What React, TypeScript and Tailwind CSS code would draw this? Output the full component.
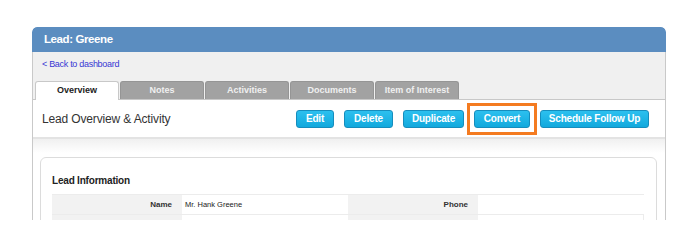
export default function App() {
  const tabs = ["Overview", "Notes", "Activities", "Documents", "Item of Interest"];
  const buttons = [
    { label: "Edit", w: "w-[38px]", hi: false },
    { label: "Delete", w: "w-[49px]", hi: false },
    { label: "Duplicate", w: "w-[61px]", hi: false },
    { label: "Convert", w: "w-[56px]", hi: true },
    { label: "Schedule Follow Up", w: "w-[109px]", hi: false },
  ];
  return (
    <div className="w-[700px] h-[242px] bg-white pt-[27px] pl-[32px] font-['Liberation_Sans',Arial,sans-serif]">
      <div className="w-[634px] h-[193px] overflow-hidden rounded-t-[5px] flex flex-col">
        <div className="h-[25px] shrink-0 bg-[#5b8dc0] rounded-t-[5px] pl-[12px] flex items-center text-white font-bold text-[11.5px] tracking-[-0.4px]">
          Lead: Greene
        </div>
        <div className="flex-1 flex flex-col border-x border-[#c9c9c9]">
          <div className="bg-[#f0f0f0] h-[48px] shrink-0 flex flex-col border-b border-[#c8c8c8]">
            <div className="pl-[9px] pt-[6px] h-[29px] shrink-0 text-[9px] leading-[12px] text-[#3838d4] tracking-[-0.3px]">
              &lt; Back to dashboard
            </div>
            <div className="flex gap-[1px] pl-[2px] h-[18px] items-end">
              {tabs.map((t, i) =>
                i === 0 ? (
                  <div
                    key={t}
                    className="relative w-[84px] h-[19px] -mb-px bg-white border border-b-0 border-[#c8c8c8] rounded-t-[3px] flex items-center justify-center text-[9px] font-bold text-[#222]"
                  >
                    {t}
                  </div>
                ) : (
                  <div
                    key={t}
                    className="w-[84px] h-[18px] bg-[#a2a2a2] border border-b-0 border-[#959595] rounded-t-[3px] flex items-center justify-center text-[9px] font-bold text-[#f0f0f0]"
                  >
                    {t}
                  </div>
                )
              )}
            </div>
          </div>
          <div className="h-[37px] shrink-0 bg-white flex items-center justify-between pl-[9px] pr-[16px]">
            <div className="text-[12px] text-[#333] tracking-[-0.15px]">Lead Overview &amp; Activity</div>
            <div className="flex gap-[10px] items-center">
              {buttons.map((b) => (
                <div key={b.label} className="relative">
                  <div
                    className={`${b.w} h-[18px] rounded-[3px] bg-[linear-gradient(to_bottom,#2cc0ef,#12a9dd)] border border-[#168dbd] flex items-center justify-center text-white font-bold text-[10px] tracking-[-0.2px] whitespace-nowrap`}
                  >
                    {b.label}
                  </div>
                  {b.hi && (
                    <div className="absolute -inset-[7px] border-[3px] border-[#f47b20]" />
                  )}
                </div>
              ))}
            </div>
          </div>
          <div className="flex-1 border-t-2 border-[#e3e3e3] bg-[linear-gradient(to_bottom,#f0f0f0,#ffffff_14px)] pt-[18px] pl-[7px] pr-[8px]">
            <div className="h-[80px] rounded-[6px] border border-[#dcdcdc] bg-white pt-[17px] px-[11px]">
              <div className="text-[10px] leading-[12px] font-bold text-[#222] tracking-[-0.2px] mb-[7px]">
                Lead Information
              </div>
              <div className="w-[592px] border-r border-[#ececec]">
                <div className="grid grid-cols-[130px_166px_130px_166px] h-[21px] border-y border-[#ececec]">
                  <div className="bg-[#f2f2f2] flex items-center justify-end pr-[10px] text-[8px] font-bold text-[#333]">
                    Name
                  </div>
                  <div className="flex items-center pl-[3px] text-[7.5px] text-[#222]">Mr. Hank Greene</div>
                  <div className="bg-[#f2f2f2] flex items-center justify-end pr-[10px] text-[8px] font-bold text-[#333]">
                    Phone
                  </div>
                  <div className="bg-white" />
                </div>
                <div className="grid grid-cols-[130px_166px_130px_166px] h-[21px] border-b border-[#ececec]">
                  <div className="bg-[#f2f2f2]" />
                  <div />
                  <div className="bg-[#f2f2f2]" />
                  <div />
                </div>
              </div>
            </div>
          </div>
        </div>
      </div>
    </div>
  );
}
